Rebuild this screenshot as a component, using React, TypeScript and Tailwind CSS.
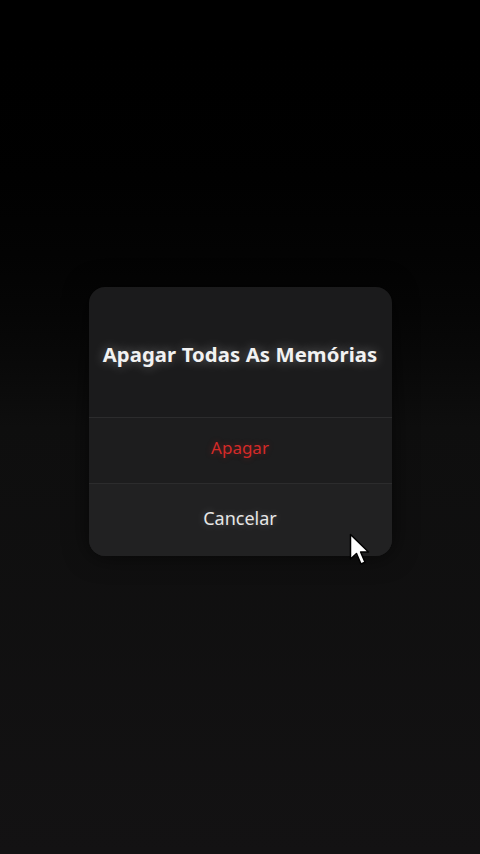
const App = () => {
  return (
    <div
      className="relative flex h-[854px] w-[480px] flex-col items-center bg-gradient-to-b from-[#000000] via-[#0e0e0e] to-[#131213]"
      style={{ fontFamily: '"Noto Sans", "Open Sans", sans-serif' }}
    >
      <div className="mt-[287px] flex w-[303px] flex-col overflow-hidden rounded-[16px] bg-[#1b1b1c] shadow-[0_0_24px_rgba(0,0,0,0.6)]">
        <div className="flex h-[130px] items-center justify-center pt-[4px]">
          <h1 className="text-[20.3px] font-bold tracking-[0.1px] text-[#f2f2f2] [text-shadow:0_0_12px_rgba(255,255,255,0.35)]">
            Apagar Todas As Memórias
          </h1>
        </div>
        <button className="flex h-[66px] items-center justify-center border-t border-[#2c2c2d] bg-[#1d1d1e] pb-[5px] text-[17px] text-[#d42a28] [text-shadow:0_0_6px_rgba(212,42,40,0.35)]">
          Apagar
        </button>
        <button className="flex h-[73px] items-center justify-center border-t border-[#2c2c2d] bg-[#212122] pb-[4px] text-[18px] text-[#e6e6e6] [text-shadow:0_0_8px_rgba(255,255,255,0.25)]">
          Cancelar
        </button>
      </div>

      <svg
        className="absolute left-[349px] top-[533px]"
        width="22"
        height="34"
        viewBox="0 0 22 34"
      >
        <path
          d="M1.5 1.5 L1.5 26 L7.5 20.5 L12 31 L16 29.3 L11.6 19 L19.5 19 Z"
          fill="#ffffff"
          stroke="#000000"
          strokeWidth="1.5"
          strokeLinejoin="round"
        />
      </svg>
    </div>
  );
};

export default App;
